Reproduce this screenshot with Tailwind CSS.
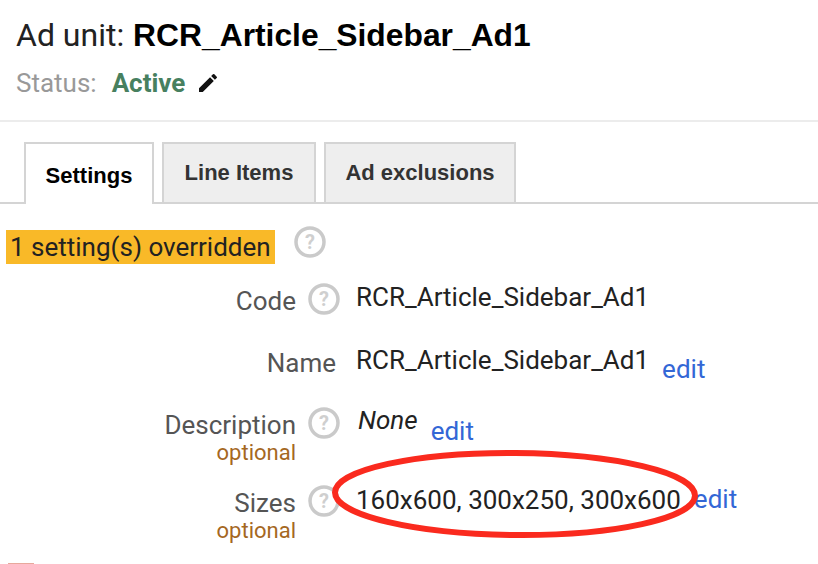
<!DOCTYPE html>
<html lang="en">
<head>
  <meta charset="UTF-8">
  <title>Ad unit</title>
  <script src="https://cdn.jsdelivr.net/npm/@tailwindcss/browser@4"></script>
</head>
<body class="bg-white">
<div class="relative w-[818px] h-[564px] overflow-hidden font-['Roboto',sans-serif] text-[#222]">

  <!-- Header -->
  <div class="h-[103px] border-b-2 border-[#ececec] pl-4 pt-[17px] box-content">
    <h1 class="text-[32px] leading-[36px] text-[#222] whitespace-nowrap">Ad unit: <b class="ml-[1px] font-['Liberation_Sans',sans-serif] font-bold text-[#000] text-[31.8px]">RCR_Article_Sidebar_Ad1</b></h1>
    <div class="flex items-center mt-[14px] text-[26px] leading-[32px]">
      <span class="text-[#999]">Status:</span>
      <span class="ml-[15px] font-bold text-[#47805f]">Active</span>
      <svg class="ml-[11px] w-[24px] h-[24px]" viewBox="0 0 24 24" fill="#111"><path d="M3 17.25V21h3.75L17.81 9.94l-3.75-3.75L3 17.25zM20.71 7.04a1 1 0 0 0 0-1.41l-2.34-2.34a1 1 0 0 0-1.41 0l-1.83 1.83 3.75 3.75 1.83-1.83z"/></svg>
    </div>
  </div>

  <!-- Tabs -->
  <div class="flex items-end gap-[8px] h-[62px] pl-[24px] border-b-2 border-[#d4d4d4] box-content -mt-[2px] pt-[20px]">
    <div class="w-[130px] h-[62px] -mb-[2px] bg-white border-2 border-b-0 border-[#d4d4d4] flex items-center justify-center pt-[3px] font-['Liberation_Sans',sans-serif] font-bold text-[22px] text-[#000]">Settings</div>
    <div class="w-[154px] h-[60px] bg-[#eee] border-2 border-b-0 border-[#d4d4d4] flex items-center justify-center pb-[2px] font-['Liberation_Sans',sans-serif] font-bold text-[22px] text-[#333]">Line Items</div>
    <div class="w-[192px] h-[60px] bg-[#eee] border-2 border-b-0 border-[#d4d4d4] flex items-center justify-center pb-[2px] font-['Liberation_Sans',sans-serif] font-bold text-[22px] text-[#333]">Ad exclusions</div>
  </div>

  <!-- Overridden -->
  <div class="flex items-start pl-[6px] pt-[26px]">
    <span class="bg-[#f9b928] h-[34px] leading-[34px] px-[4px] text-[26px] text-[#222] whitespace-nowrap">1 setting(s) overridden</span>
    <svg class="ml-[19px] -mt-[4px] w-8 h-8" viewBox="0 0 32 32"><circle cx="16" cy="16" r="14" fill="none" stroke="#cacaca" stroke-width="3.5"/><text x="16" y="23" text-anchor="middle" font-size="20" font-weight="700" font-family="Roboto" fill="#cfcfcf">?</text></svg>
  </div>

  <!-- Rows -->
  <div class="flex items-start h-[62px] mt-[19px]">
    <span class="w-[296px] mt-[1px] text-right text-[26px] leading-[34px] text-[#555]">Code</span>
    <svg class="ml-[12px] w-8 h-8" viewBox="0 0 32 32"><circle cx="16" cy="16" r="14" fill="none" stroke="#cacaca" stroke-width="3.5"/><text x="16" y="23" text-anchor="middle" font-size="20" font-weight="700" font-family="Roboto" fill="#cfcfcf">?</text></svg>
    <span class="ml-[16px] -mt-[2px] text-[26px] leading-[32px] text-[#222]">RCR_Article_Sidebar_Ad1</span>
  </div>
  <div class="flex items-start h-[62px]">
    <span class="w-[336px] mt-[1px] text-right text-[26px] leading-[34px] text-[#555]">Name</span>
    <span class="ml-[20px] -mt-[1px] text-[26px] leading-[32px] text-[#222]">RCR_Article_Sidebar_Ad1</span>
    <span class="ml-[13px] mt-[8px] text-[26px] leading-[32px] text-[#3367d6]">edit</span>
  </div>
  <div class="flex items-start h-[78px]">
    <div class="w-[296px] mt-[1px] text-right">
      <div class="text-[26px] leading-[34px] text-[#555]">Description</div>
      <div class="text-[22px] leading-[22px] text-[#a5681f]">optional</div>
    </div>
    <svg class="ml-[12px] w-8 h-8" viewBox="0 0 32 32"><circle cx="16" cy="16" r="14" fill="none" stroke="#cacaca" stroke-width="3.5"/><text x="16" y="23" text-anchor="middle" font-size="20" font-weight="700" font-family="Roboto" fill="#cfcfcf">?</text></svg>
    <span class="ml-[18px] -mt-[3px] italic text-[26px] leading-[32px] text-[#222]">None</span>
    <span class="ml-[13px] mt-[8px] text-[26px] leading-[32px] text-[#3367d6]">edit</span>
  </div>
  <div class="flex items-start">
    <div class="w-[296px] mt-[1px] text-right">
      <div class="text-[26px] leading-[34px] text-[#555]">Sizes</div>
      <div class="text-[22px] leading-[22px] text-[#a5681f]">optional</div>
    </div>
    <svg class="ml-[12px] w-8 h-8" viewBox="0 0 32 32"><circle cx="16" cy="16" r="14" fill="none" stroke="#cacaca" stroke-width="3.5"/><text x="16" y="23" text-anchor="middle" font-size="20" font-weight="700" font-family="Roboto" fill="#cfcfcf">?</text></svg>
    <span class="ml-[16px] -mt-[1px] text-[26px] leading-[32px] text-[#222] whitespace-nowrap">160x600, 300x250, 300x600</span>
    <span class="ml-[13px] -mt-[2px] text-[26px] leading-[32px] text-[#3367d6]">edit</span>
  </div>

  <!-- Red oval drawn over the sizes -->
  <svg class="absolute left-[325px] top-[442px]" width="380" height="104" viewBox="0 0 380 104"><ellipse cx="190" cy="52" rx="180" ry="41" transform="rotate(0.5 190 52)" fill="none" stroke="#fa2a1e" stroke-width="6"/></svg>

  <div class="absolute left-[8px] top-[563px] w-[26px] h-[1px] bg-[#e8a89c]"></div>
</div>
</body>
</html>
